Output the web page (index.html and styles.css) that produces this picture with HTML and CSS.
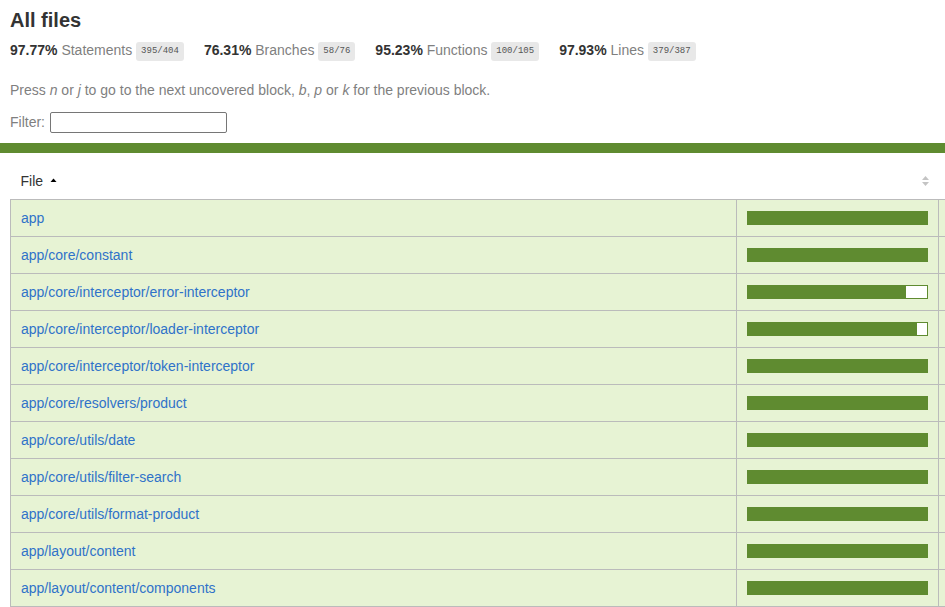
FILE: index.html
```html
<!doctype html>
<html lang="en">
<head>
<meta charset="utf-8">
<title>Code coverage report for All files</title>
<link rel="stylesheet" href="styles.css">
</head>
<body>
<div class="wrapper">
  <div class="pad1">
    <h1>All files</h1>
    <div class="stats">
      <div class="stat"><span class="strong">97.77% </span><span class="quiet">Statements</span> <span class="fraction">395/404</span></div>
      <div class="stat"><span class="strong">76.31% </span><span class="quiet">Branches</span> <span class="fraction">58/76</span></div>
      <div class="stat"><span class="strong">95.23% </span><span class="quiet">Functions</span> <span class="fraction">100/105</span></div>
      <div class="stat"><span class="strong">97.93% </span><span class="quiet">Lines</span> <span class="fraction">379/387</span></div>
    </div>
    <p class="quiet help">Press <em>n</em> or <em>j</em> to go to the next uncovered block, <em>b</em>, <em>p</em> or <em>k</em> for the previous block.</p>
    <div class="quiet filter">Filter: <input type="search" class="search" aria-label="Filter"></div>
  </div>
  <div class="status-line high"></div>
  <div class="pad1">
    <table class="coverage-summary">
      <colgroup>
        <col class="c-file"><col class="c-pic">
        <col class="c-pct"><col class="c-abs"><col class="c-pct"><col class="c-abs">
        <col class="c-pct"><col class="c-abs"><col class="c-pct"><col class="c-abs">
      </colgroup>
      <thead>
        <tr>
          <th class="file">File<svg class="sorter sorted" width="7" height="10" viewBox="0 0 7 10"><path d="M3.5 2.5 L6.5 6 L0.5 6 Z" fill="#000"/></svg></th>
          <th class="pic"><svg class="sorter" width="7" height="10" viewBox="0 0 7 10"><path d="M3.5 0 L7 4 L0 4 Z M0 6 L7 6 L3.5 10 Z" fill="#c4c4c4"/></svg></th>
          <th class="pct">Statements</th><th class="abs"></th>
          <th class="pct">Branches</th><th class="abs"></th>
          <th class="pct">Functions</th><th class="abs"></th>
          <th class="pct">Lines</th><th class="abs"></th>
        </tr>
      </thead>
      <tbody>
        <tr>
          <td class="file high"><a href="#">app</a></td>
          <td class="pic high"><div class="chart"><div class="cover-fill" style="width:100%"></div></div></td>
          <td class="pct high">100%</td><td class="abs high">12/12</td><td class="pct high">100%</td><td class="abs high">0/0</td><td class="pct high">100%</td><td class="abs high">3/3</td><td class="pct high">100%</td><td class="abs high">10/10</td>
        </tr>
        <tr>
          <td class="file high"><a href="#">app/core/constant</a></td>
          <td class="pic high"><div class="chart"><div class="cover-fill" style="width:100%"></div></div></td>
          <td class="pct high">100%</td><td class="abs high">4/4</td><td class="pct high">100%</td><td class="abs high">0/0</td><td class="pct high">100%</td><td class="abs high">0/0</td><td class="pct high">100%</td><td class="abs high">4/4</td>
        </tr>
        <tr>
          <td class="file high"><a href="#">app/core/interceptor/error-interceptor</a></td>
          <td class="pic high"><div class="chart"><div class="cover-fill" style="width:88.5%"></div><div class="cover-empty" style="width:11.5%"></div></div></td>
          <td class="pct high">88.88%</td><td class="abs high">16/18</td><td class="pct high">75%</td><td class="abs high">6/8</td><td class="pct high">100%</td><td class="abs high">3/3</td><td class="pct high">88.23%</td><td class="abs high">15/17</td>
        </tr>
        <tr>
          <td class="file high"><a href="#">app/core/interceptor/loader-interceptor</a></td>
          <td class="pic high"><div class="chart"><div class="cover-fill" style="width:94.4%"></div><div class="cover-empty" style="width:5.6%"></div></div></td>
          <td class="pct high">94.44%</td><td class="abs high">17/18</td><td class="pct high">75%</td><td class="abs high">3/4</td><td class="pct high">100%</td><td class="abs high">4/4</td><td class="pct high">94.11%</td><td class="abs high">16/17</td>
        </tr>
        <tr>
          <td class="file high"><a href="#">app/core/interceptor/token-interceptor</a></td>
          <td class="pic high"><div class="chart"><div class="cover-fill" style="width:100%"></div></div></td>
          <td class="pct high">100%</td><td class="abs high">10/10</td><td class="pct high">100%</td><td class="abs high">2/2</td><td class="pct high">100%</td><td class="abs high">2/2</td><td class="pct high">100%</td><td class="abs high">9/9</td>
        </tr>
        <tr>
          <td class="file high"><a href="#">app/core/resolvers/product</a></td>
          <td class="pic high"><div class="chart"><div class="cover-fill" style="width:100%"></div></div></td>
          <td class="pct high">100%</td><td class="abs high">8/8</td><td class="pct high">100%</td><td class="abs high">0/0</td><td class="pct high">100%</td><td class="abs high">2/2</td><td class="pct high">100%</td><td class="abs high">7/7</td>
        </tr>
        <tr>
          <td class="file high"><a href="#">app/core/utils/date</a></td>
          <td class="pic high"><div class="chart"><div class="cover-fill" style="width:100%"></div></div></td>
          <td class="pct high">100%</td><td class="abs high">6/6</td><td class="pct high">100%</td><td class="abs high">2/2</td><td class="pct high">100%</td><td class="abs high">1/1</td><td class="pct high">100%</td><td class="abs high">5/5</td>
        </tr>
        <tr>
          <td class="file high"><a href="#">app/core/utils/filter-search</a></td>
          <td class="pic high"><div class="chart"><div class="cover-fill" style="width:100%"></div></div></td>
          <td class="pct high">100%</td><td class="abs high">5/5</td><td class="pct high">100%</td><td class="abs high">4/4</td><td class="pct high">100%</td><td class="abs high">2/2</td><td class="pct high">100%</td><td class="abs high">4/4</td>
        </tr>
        <tr>
          <td class="file high"><a href="#">app/core/utils/format-product</a></td>
          <td class="pic high"><div class="chart"><div class="cover-fill" style="width:100%"></div></div></td>
          <td class="pct high">100%</td><td class="abs high">4/4</td><td class="pct high">100%</td><td class="abs high">0/0</td><td class="pct high">100%</td><td class="abs high">2/2</td><td class="pct high">100%</td><td class="abs high">3/3</td>
        </tr>
        <tr>
          <td class="file high"><a href="#">app/layout/content</a></td>
          <td class="pic high"><div class="chart"><div class="cover-fill" style="width:100%"></div></div></td>
          <td class="pct high">100%</td><td class="abs high">9/9</td><td class="pct high">100%</td><td class="abs high">0/0</td><td class="pct high">100%</td><td class="abs high">2/2</td><td class="pct high">100%</td><td class="abs high">8/8</td>
        </tr>
        <tr>
          <td class="file high"><a href="#">app/layout/content/components</a></td>
          <td class="pic high"><div class="chart"><div class="cover-fill" style="width:100%"></div></div></td>
          <td class="pct high">100%</td><td class="abs high">14/14</td><td class="pct high">100%</td><td class="abs high">2/2</td><td class="pct high">100%</td><td class="abs high">5/5</td><td class="pct high">100%</td><td class="abs high">12/12</td>
        </tr>
      </tbody>
    </table>
  </div>
</div>
</body>
</html>
```

FILE: styles.css
```css
html {
  overflow: hidden;
}
html, body {
  margin: 0;
  padding: 0;
}
*, *::before, *::after {
  box-sizing: border-box;
}
body {
  font-family: "Liberation Sans", Arial, sans-serif;
  font-size: 14px;
  line-height: 16px;
  color: #333;
  background: #fff;
}
.pad1 {
  padding: 10px;
}
h1 {
  font-size: 20px;
  line-height: 21px;
  margin: 0;
  font-weight: bold;
}
.stats {
  display: flex;
}
.stat {
  padding: 10px 20px 10px 0;
  line-height: 18px;
  white-space: nowrap;
}
.strong {
  font-weight: bold;
}
.quiet {
  color: #7f7f7f;
}
.fraction {
  font-family: "Liberation Mono", monospace;
  font-size: 9px;
  line-height: 11px;
  color: #555;
  background: #e8e8e8;
  padding: 4px 5px;
  border-radius: 3px;
  vertical-align: middle;
  display: inline-block;
}
.help {
  margin: 11px 0 14px;
}
.filter {
  display: flex;
  align-items: center;
  gap: 5px;
  height: 21px;
}
.search {
  width: 177px;
  height: 21px;
  margin: 0;
  padding: 1px 2px;
  border: 1px solid #767676;
  border-radius: 2px;
  background: #fff;
  font-family: "Liberation Sans", Arial, sans-serif;
  font-size: 13px;
}
.status-line {
  height: 10px;
}
.status-line.high {
  background: #5f8b30;
}
.coverage-summary {
  border-collapse: collapse;
  table-layout: fixed;
  width: 1648px;
  margin: 0;
}
.c-file { width: 726px; }
.c-pic { width: 202px; }
.c-pct { width: 100px; }
.c-abs { width: 80px; }
.coverage-summary tr {
  border-bottom: 1px solid #bbb;
}
.coverage-summary tbody {
  border: 1px solid #bbb;
}
.coverage-summary th,
.coverage-summary td {
  padding: 10px;
  vertical-align: top;
}
.coverage-summary th {
  text-align: left;
  font-weight: normal;
  white-space: nowrap;
}
.coverage-summary td {
  border-right: 1px solid #bbb;
}
.coverage-summary td:last-child {
  border-right: none;
}
.coverage-summary th.pic,
.coverage-summary th.pct,
.coverage-summary td.pct,
.coverage-summary td.abs {
  text-align: right;
}
.coverage-summary td.file {
  white-space: nowrap;
}
.sorter {
  display: inline-block;
  vertical-align: middle;
  margin-top: -2px;
}
.sorter.sorted {
  margin-left: 7px;
}
.high {
  background: #e7f3d4;
}
a {
  color: #2f72c9;
  text-decoration: none;
}
.chart {
  line-height: 0;
  margin-top: 1px;
  display: flex;
}
.high .chart {
  border: 1px solid #5f8b30;
}
.cover-fill,
.cover-empty {
  display: block;
  height: 12px;
}
.high .cover-fill {
  background: #5f8b30;
}
.cover-empty {
  background: #fff;
}
```
